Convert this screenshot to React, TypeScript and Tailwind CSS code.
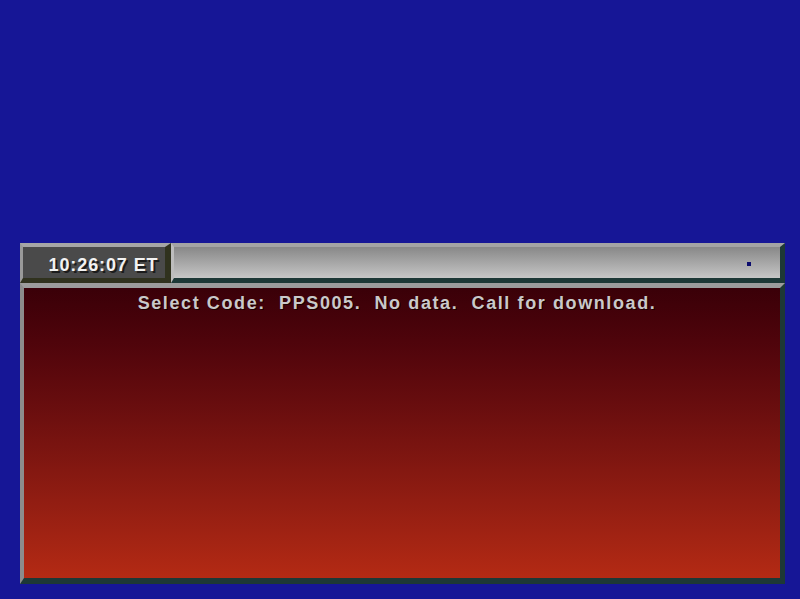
import React from "react";

export default function App() {
  return (
    <div
      className="w-[800px] h-[599px] bg-[#161696] pt-[243px] pl-[20px]"
      style={{ fontFamily: '"Liberation Sans", Arial, sans-serif' }}
    >
      <div className="w-[765px] flex flex-col">
        {/* Header */}
        <div className="h-[40px] flex">
          <div className="w-[151px] h-full bg-[#4a4a4a] border-t-[4px] border-l-[3px] border-r-[6px] border-b-[5px] border-t-[#a6a6a6] border-l-[#9a9a9a] border-r-[#30321e] border-b-[#30321e] flex items-center justify-center pt-[5px] pl-[19px]">
            <span className="text-[18px] font-bold tracking-[0.9px] text-[#f2f2f2] [text-shadow:2px_2px_0_#1c1c1c]">
              10:26:07 ET
            </span>
          </div>
          <div className="flex-1 h-full bg-gradient-to-b from-[#888888] to-[#c6c6c6] border-t-[4px] border-l-[3px] border-r-[5px] border-b-[5px] border-t-[#a4a4a4] border-l-[#bdbdbd] border-r-[#1d3836] border-b-[#1d3836] flex items-center justify-end pr-[29px] pt-[3px]">
            <div className="w-[4px] h-[4px] bg-[#0c0c6e]" />
          </div>
        </div>

        {/* Content */}
        <div className="h-[301px] bg-gradient-to-b from-[#3a0008] to-[#b42a14] border-t-[5px] border-l-[4px] border-r-[5px] border-b-[6px] border-t-[#9c9c9c] border-l-[#8c8c8c] border-r-[#1d3836] border-b-[#1d3836] flex justify-center pt-[4px] pr-[10px]">
          <span className="text-[18px] leading-[22px] font-bold tracking-[1.6px] text-[#c9c9c9] whitespace-pre [text-shadow:1px_1px_0_#1a0000]">
            {"Select Code:  PPS005.  No data.  Call for download."}
          </span>
        </div>
      </div>
    </div>
  );
}
